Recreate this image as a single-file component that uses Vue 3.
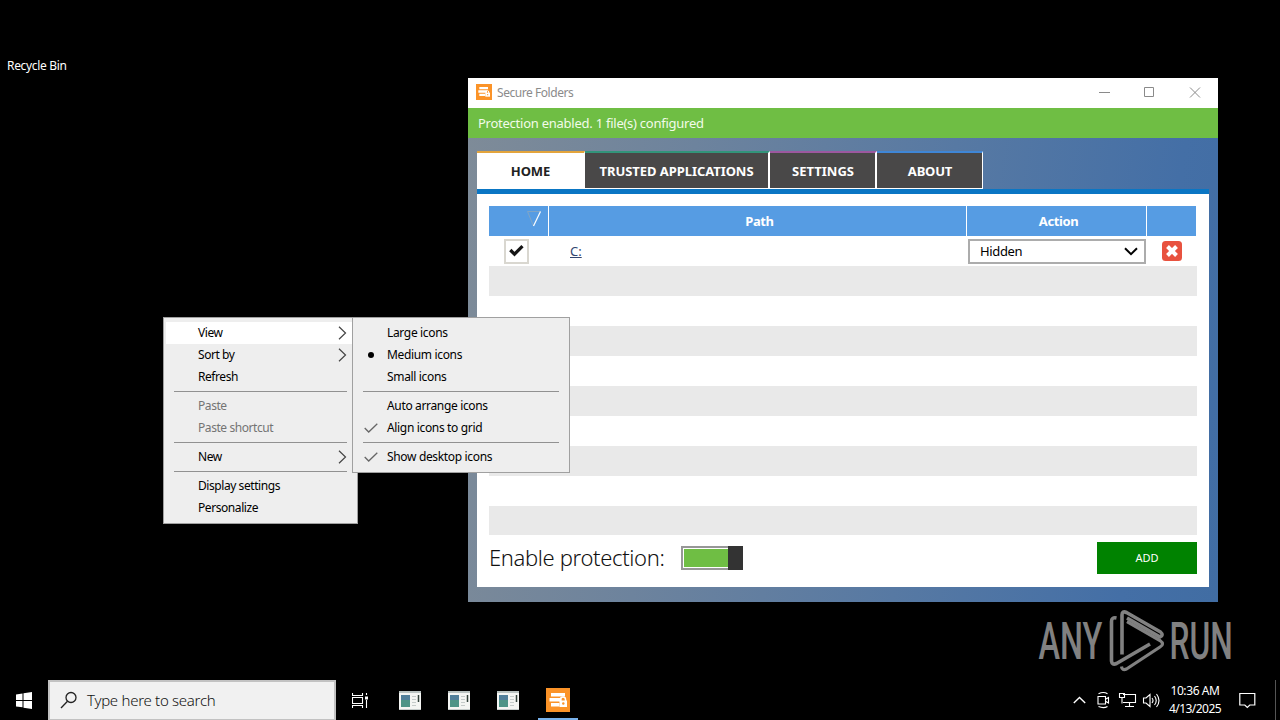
<template>
  <div class="desktop">
    <div class="desktop-icon">Recycle Bin</div>

    <section class="window">
      <header class="titlebar">
        <svg class="app-icon" viewBox="0 0 24 24">
          <rect width="24" height="24" fill="#fb9328" />
          <path d="M5 4.500h13v3.500H5zM3.500 9.500h13v3.500h-13zM5 14.500h9v3.500H5z" fill="#fff" />
          <path d="M15 14v-2a2 2 0 0 1 4 0v2" fill="none" stroke="#fff" stroke-width="1.5" />
          <rect x="14" y="13" width="7" height="6" fill="#fff" />
          <circle cx="17.5" cy="16" r="1" fill="#fb9328" />
        </svg>
        <span class="title">Secure Folders</span>
        <svg class="controls" viewBox="0 0 102 12">
          <path d="M0 6.500h11M45.500 1.500h9v9h-9zM91 1.500l10 10M101 1.500l-10 10" />
        </svg>
      </header>

      <div class="status">Protection enabled. 1 file(s) configured</div>

      <div class="body">
        <nav class="tabs">
          <div
            v-for="tab in tabs"
            :key="tab.id"
            class="tab"
            :class="[tab.id, { active: activeTab === tab.id }]"
            @click="activeTab = tab.id"
          >
            <span>{{ tab.label }}</span>
          </div>
        </nav>

        <div class="panel">
          <div class="grid">
            <div class="row head">
              <div class="cell sort">
                <svg width="16" height="18" viewBox="0 0 16 18">
                  <path d="M14.500 1.500H1.500L7.500 16" fill="none" stroke="#80a5c6" />
                  <path d="M14.500 1.500L7.500 16" stroke="#fff" stroke-width="1.2" />
                </svg>
              </div>
              <div class="cell"><span>Path</span></div>
              <div class="cell"><span>Action</span></div>
              <div class="cell"></div>
            </div>
            <div class="row">
              <div class="cell">
                <div class="checkbox" @click="checked = !checked">
                  <svg v-if="checked" width="16" height="14" viewBox="0 0 16 14">
                    <path d="M1.300 6L5.500 10.200L13.500 2.100" fill="none" stroke="#151515" stroke-width="3.200" />
                  </svg>
                </div>
              </div>
              <div class="cell path"><a>C:</a></div>
              <div class="cell action">
                <div class="select">
                  <span>Hidden</span>
                  <svg width="14" height="9" viewBox="0 0 14 9">
                    <path d="M1 1.300L7 7.200L13 1.300" fill="none" stroke="#000" stroke-width="2" />
                  </svg>
                </div>
              </div>
              <div class="cell remove">
                <svg width="20" height="20" viewBox="0 0 20 20">
                  <rect width="20" height="20" rx="3.500" fill="#e8523f" />
                  <path d="M5.500 5.500l9 9M14.500 5.500l-9 9" stroke="#fff" stroke-width="4" />
                </svg>
              </div>
            </div>
            <div v-for="n in 9" :key="n" class="row" :class="{ odd: n % 2 === 1 }"></div>
          </div>

          <footer class="footer">
            <span class="enable">Enable protection:</span>
            <div class="toggle"><i></i></div>
            <button class="add">ADD</button>
          </footer>
        </div>
      </div>
    </section>

    <ul class="menu main-menu">
      <li v-for="(item, i) in menu" :key="i" :class="[item.label ? 'item' : 'sep', { hover: item.hover, disabled: item.disabled }]">
        <template v-if="item.label">
          <span>{{ item.label }}</span>
          <svg v-if="item.sub" class="chevron" width="9" height="14" viewBox="0 0 9 14">
            <path d="M1 .8L7.500 7L1 13.200" />
          </svg>
        </template>
      </li>
    </ul>

    <ul class="menu sub-menu">
      <li v-for="(item, i) in viewMenu" :key="i" :class="item.label ? 'item' : 'sep'">
        <template v-if="item.label">
          <i v-if="item.mark === 'dot'" class="dot"></i>
          <svg v-if="item.mark === 'check'" class="check" width="14" height="10" viewBox="0 0 14 10">
            <path d="M.7 5l4 4L13.300 .7" />
          </svg>
          <span>{{ item.label }}</span>
        </template>
      </li>
    </ul>

    <svg class="watermark" width="220" height="70" viewBox="0 0 220 70">
      <g transform="translate(4.5 53) scale(.62 1)">
        <text textLength="103" lengthAdjust="spacingAndGlyphs">ANY</text>
      </g>
      <g transform="translate(135.5 53) scale(.62 1)">
        <text textLength="102" lengthAdjust="spacingAndGlyphs">RUN</text>
      </g>
      <g fill="none" stroke="#818181" stroke-linejoin="round">
        <path d="M88 48.500V9q0-4.500 4.500-2.500l34 19.500q3.500 3-.5 5L93 12" stroke-width="3.600" />
        <path d="M82.500 12q-5-1-5 3.500V55q.5 4.500 5 2.500L116 38" stroke-width="3.600" />
        <path d="M87.500 60.500q.5 4.500 5 2.500L126 41q5-3 0-6.500L93 15.500" stroke-width="3.200" />
      </g>
    </svg>

    <footer class="taskbar">
      <div class="start">
        <svg width="16" height="17" viewBox="0 0 16 17">
          <path d="M0 2.400L6.500 1.500V8H0zM7.500 1.300L16 0V8H7.500zM0 9h6.500v6.300L0 14.500zM7.500 9H16v8l-8.500-1.300z" fill="#fff" />
        </svg>
      </div>
      <div class="search">
        <svg width="18" height="18" viewBox="0 0 18 18">
          <circle cx="11" cy="6.500" r="5" />
          <path d="M7.500 10.200L1 17" />
        </svg>
        <span>Type here to search</span>
      </div>
      <div class="task-view">
        <svg width="17" height="17" viewBox="0 0 17 17">
          <path d="M.5 1v2.500h10V1M.5 5.500h10v6h-10zM.5 16v-2.500h10V16M14.500 1v2M14.500 8v8" />
          <rect x="13" y="4.500" width="3" height="3" fill="#fff" stroke="none" />
        </svg>
      </div>
      <div v-for="n in 3" :key="n" class="task">
        <svg width="22" height="19" viewBox="0 0 22 19">
          <rect width="22" height="19" fill="#f4f5f3" />
          <rect width="22" height="2" fill="#b9c2c1" />
          <rect x="2" y="4" width="9" height="12" fill="#4d9487" />
          <rect x="2" y="4" width="9" height="5" fill="#517f9a" />
          <path d="M13 5.500h4M13 8.500h4M13 11.500h4M13 14.500h4" stroke="#c5cbca" />
          <path d="M19.500 4v7" stroke="#33423b" stroke-width="1.500" />
          <path d="M0 18.500h22" stroke="#c5cbca" />
        </svg>
      </div>
      <div class="task running">
        <svg width="24" height="24" viewBox="0 0 24 24">
          <rect width="24" height="24" fill="#fb9328" />
          <path d="M5 5h14v3.500H5zM3.500 10h12v3.500h-12zM5 15h8.500v3.500H5z" fill="#fff" />
          <path d="M14.500 14v-2.500a2.500 2.500 0 0 1 5 0V14" fill="none" stroke="#fff" stroke-width="1.500" />
          <rect x="13.500" y="12.500" width="7.500" height="6.500" fill="#fff" />
          <circle cx="17.300" cy="15.500" r="1.200" fill="#fb9328" />
        </svg>
      </div>
      <div class="tray">
        <svg width="88" height="18" viewBox="0 0 88 18">
          <path d="M.8 12L6.500 6.500L12.200 12" stroke-width="1.400" />
          <path d="M25.500 2.800q5-2.500 9 0M25.500 15.500q5 2.200 9 0M25 5.500h7.500v7.500H25zM32.500 8.200l3-1.700v5.500l-3-1.700" />
          <path d="M50 3.500h12.500v8H50M46.500 2.500h5v4h-5zM49 6.500v6M56.500 11.500v3.500M52 15.500h9" />
          <path d="M70.500 7h2.500l4-3.500v12l-4-3.500h-2.500zM79 7q2 2.500 0 5M81.500 5q3.500 4.500 0 9M83.500 3q5 6.500 0 13" />
        </svg>
        <div class="clock">
          <span>10:36 AM</span>
          <span class="date">4/13/2025</span>
        </div>
        <svg class="note" width="17" height="17" viewBox="0 0 17 17">
          <path d="M.8 1.500h15v11.500h-5L8.300 15.500L5.800 13h-5z" stroke-width="1.200" />
        </svg>
        <i class="peek"></i>
      </div>
    </footer>
  </div>
</template>

<script setup>
import { ref } from 'vue'

const activeTab = ref('home')
const checked = ref(true)

const tabs = [
  { id: 'home', label: 'HOME' },
  { id: 'trusted', label: 'TRUSTED APPLICATIONS' },
  { id: 'settings', label: 'SETTINGS' },
  { id: 'about', label: 'ABOUT' }
]

const menu = [
  { label: 'View', sub: true, hover: true },
  { label: 'Sort by', sub: true },
  { label: 'Refresh' },
  {},
  { label: 'Paste', disabled: true },
  { label: 'Paste shortcut', disabled: true },
  {},
  { label: 'New', sub: true },
  {},
  { label: 'Display settings' },
  { label: 'Personalize' }
]

const viewMenu = [
  { label: 'Large icons' },
  { label: 'Medium icons', mark: 'dot' },
  { label: 'Small icons' },
  {},
  { label: 'Auto arrange icons' },
  { label: 'Align icons to grid', mark: 'check' },
  {},
  { label: 'Show desktop icons', mark: 'check' }
]
</script>

<style>
body {
  margin: 0;
  background: #000;
}
</style>

<style scoped>
.desktop {
  position: relative;
  display: flex;
  flex-direction: column;
  justify-content: flex-end;
  width: 1280px;
  height: 720px;
  overflow: hidden;
  background: #000;
  font-family: "Noto Sans", "Open Sans", sans-serif;
  font-size: 12px;
  white-space: nowrap;
}

.desktop * {
  box-sizing: border-box;
}

svg {
  display: block;
  flex: none;
}

.desktop-icon {
  position: absolute;
  left: 7px;
  top: 57px;
  line-height: 18px;
  color: #fff;
  letter-spacing: -0.33px;
}

/* application window */
.window {
  position: absolute;
  left: 468px;
  top: 78px;
  width: 750px;
  height: 524px;
  display: flex;
  flex-direction: column;
}

.titlebar {
  height: 30px;
  flex: none;
  display: flex;
  align-items: center;
  padding: 0 17px 2px 8px;
  background: #fff;
  color: #8b8b8b;
}

.app-icon {
  width: 16px;
  height: 16px;
}

.title {
  margin-left: 5px;
  letter-spacing: -0.45px;
  padding-top: 1px;
}

.controls {
  width: 102px;
  height: 12px;
  margin-left: auto;
  fill: none;
  stroke: #8a8a8a;
}

.status {
  height: 30px;
  flex: none;
  padding-left: 10px;
  background: #6fbe44;
  color: #f2fbe9;
  font-size: 13px;
  line-height: 31px;
  letter-spacing: -0.25px;
}

.body {
  flex: 1;
  display: flex;
  flex-direction: column;
  padding: 13px 9px 15px;
  background: linear-gradient(98deg, #7e8b98 0%, #6d839d 28%, #5779a3 60%, #446fa6 88%, #416da3 100%);
}

.tabs {
  display: flex;
  height: 38px;
  flex: none;
}

.tab {
  width: 107px;
  border-top: 2px solid;
  border-right: 2px solid #fff;
  border-bottom: 1px solid #fff;
  background: #494848;
  background-clip: padding-box;
  color: #fff;
  font-size: 13px;
  font-weight: 700;
  line-height: 36px;
  text-align: center;
}

.tab.active {
  background: #fff;
  color: #222;
}

.tab.home {
  width: 108px;
  border-top-color: #e3a43c;
  border-right-width: 1px;
  letter-spacing: -0.1px;
}

.tab.trusted {
  width: 185px;
  border-top-color: #32947a;
  letter-spacing: -0.06px;
}

.tab.settings {
  padding-left: 1px;
  border-top-color: #9c589f;
  letter-spacing: 0;
}

.tab.about {
  width: 106px;
  padding-left: 1px;
  border-top-color: #3f86d6;
  border-right-width: 1px;
  letter-spacing: -0.2px;
}

.panel {
  flex: 1;
  padding: 12px 12px 0;
  border-top: 5px solid #0a76c4;
  background: #fff;
}

.row {
  display: grid;
  grid-template-columns: 60px 418px 180px 50px;
  height: 30px;
}

.row.odd {
  background: #e9e9e9;
}

.row:last-child {
  height: 29px;
}

.cell {
  display: flex;
  align-items: center;
  justify-content: center;
}

.head {
  margin-right: 1px;
  background: #569ce3;
  color: #fff;
  font-size: 13px;
  font-weight: 700;
  letter-spacing: -0.4px;
  grid-template-columns: 60px 418px 180px 49px;
}

.head .cell + .cell {
  padding-left: 4px;
}

.head .cell:not(:last-child) {
  border-right: 1px solid #fff;
}

.head .sort {
  justify-content: flex-end;
  padding: 0 6px 4px 0;
}

.checkbox {
  display: flex;
  align-items: center;
  justify-content: center;
  width: 25px;
  height: 25px;
  margin-right: 5px;
  border: 2px solid #d9d7d0;
  background: #fff;
}

.cell.path {
  justify-content: flex-start;
  padding-left: 21px;
  color: #33466f;
  font-size: 13px;
}

.path a {
  text-decoration: underline;
}

.select {
  display: flex;
  align-items: center;
  justify-content: space-between;
  width: 178px;
  height: 25px;
  padding: 0 6px 0 10px;
  border: 2px solid #acacac;
  background: #fff;
  color: #000;
  font-size: 13px;
  letter-spacing: -0.35px;
}

.footer {
  display: flex;
  align-items: flex-start;
  padding-top: 7px;
}

.enable {
  width: 192px;
  font-size: 22px;
  font-weight: 300;
  line-height: 30px;
  letter-spacing: -0.35px;
  color: #111;
}

.toggle {
  display: flex;
  width: 62px;
  height: 24px;
  margin-top: 4px;
}

.toggle::before {
  content: "";
  width: 46px;
  border: 2px solid #979797;
  border-right: 0;
  box-shadow: inset 1px 1px #fff, inset 0 -1px #fff;
  background: #6fbe44;
}

.toggle i {
  width: 16px;
  background: #333;
}

.add {
  width: 100px;
  height: 32px;
  margin-left: auto;
  padding: 0 0 1px;
  border: 0;
  background: #008200;
  color: #fff;
  font: 11px "Noto Sans", sans-serif;
}

/* context menus */
.menu {
  position: absolute;
  top: 317px;
  margin: 0;
  padding: 4px 0;
  border: 1px solid #a0a0a0;
  background: #eee;
  list-style: none;
  color: #000;
  letter-spacing: -0.34px;
}

.main-menu {
  left: 163px;
  width: 195px;
  letter-spacing: -0.43px;
}

.sub-menu {
  left: 352px;
  width: 218px;
}

.item {
  display: flex;
  position: relative;
  height: 22px;
  padding-left: 34px;
  line-height: 22px;
}

.main-menu .item {
  justify-content: space-between;
  align-items: center;
  padding-right: 10px;
  margin: 0 2px;
  padding-left: 32px;
}

.main-menu .chevron {
  margin-right: -2px;
}

.hover {
  background: #fff;
}

.disabled {
  color: #747474;
}

.sep {
  height: 7px;
  padding: 3px 10px;
}

.sep::before {
  content: "";
  display: block;
  height: 1px;
  background: #919191;
}

.chevron {
  fill: none;
  stroke: #444;
  stroke-width: 1.2;
}

.dot {
  position: absolute;
  left: 15px;
  top: 8px;
  width: 6px;
  height: 6px;
  border-radius: 50%;
  background: #000;
}

.check {
  position: absolute;
  left: 11px;
  top: 6px;
  fill: none;
  stroke: #666;
  stroke-width: 1.3;
}

.watermark {
  position: absolute;
  left: 1034px;
  top: 606px;
}

.watermark text {
  font-family: Roboto, sans-serif;
  font-size: 52px;
  font-weight: 500;
  fill: #818181;
}

/* taskbar */
.taskbar {
  display: flex;
  height: 40px;
  color: #fff;
}

.start {
  display: flex;
  align-items: center;
  justify-content: center;
  width: 48px;
}

.search {
  display: flex;
  align-items: center;
  width: 288px;
  padding: 0 0 2px 10px;
  border: 2px solid #c2c2c2;
  border-bottom-width: 1px;
  background: #f1f1f1;
  color: #111;
  font-size: 15px;
  font-weight: 300;
  letter-spacing: -0.28px;
}

.search svg {
  margin-right: 9px;
  fill: none;
  stroke: #222;
  stroke-width: 1.3;
}

.task-view {
  display: flex;
  align-items: center;
  justify-content: center;
  width: 49px;
}

.task-view svg,
.tray svg {
  fill: none;
  stroke: #fff;
  stroke-width: 1.1;
}

.task {
  display: flex;
  align-items: center;
  justify-content: center;
  width: 49px;
}

.running {
  width: 40px;
  margin-left: 6px;
  border-bottom: 2px solid #78b1ea;
  padding-top: 2px;
}

.tray {
  display: flex;
  align-items: center;
  margin-left: auto;
}

.clock {
  display: flex;
  flex-direction: column;
  align-items: center;
  width: 54px;
  margin: 0 17px 0 7px;
  line-height: 18px;
  letter-spacing: -0.4px;
}

.clock .date {
  letter-spacing: -0.55px;
}

.peek {
  width: 1px;
  height: 40px;
  margin: 0 4px 0 19px;
  background: #555;
}
</style>
